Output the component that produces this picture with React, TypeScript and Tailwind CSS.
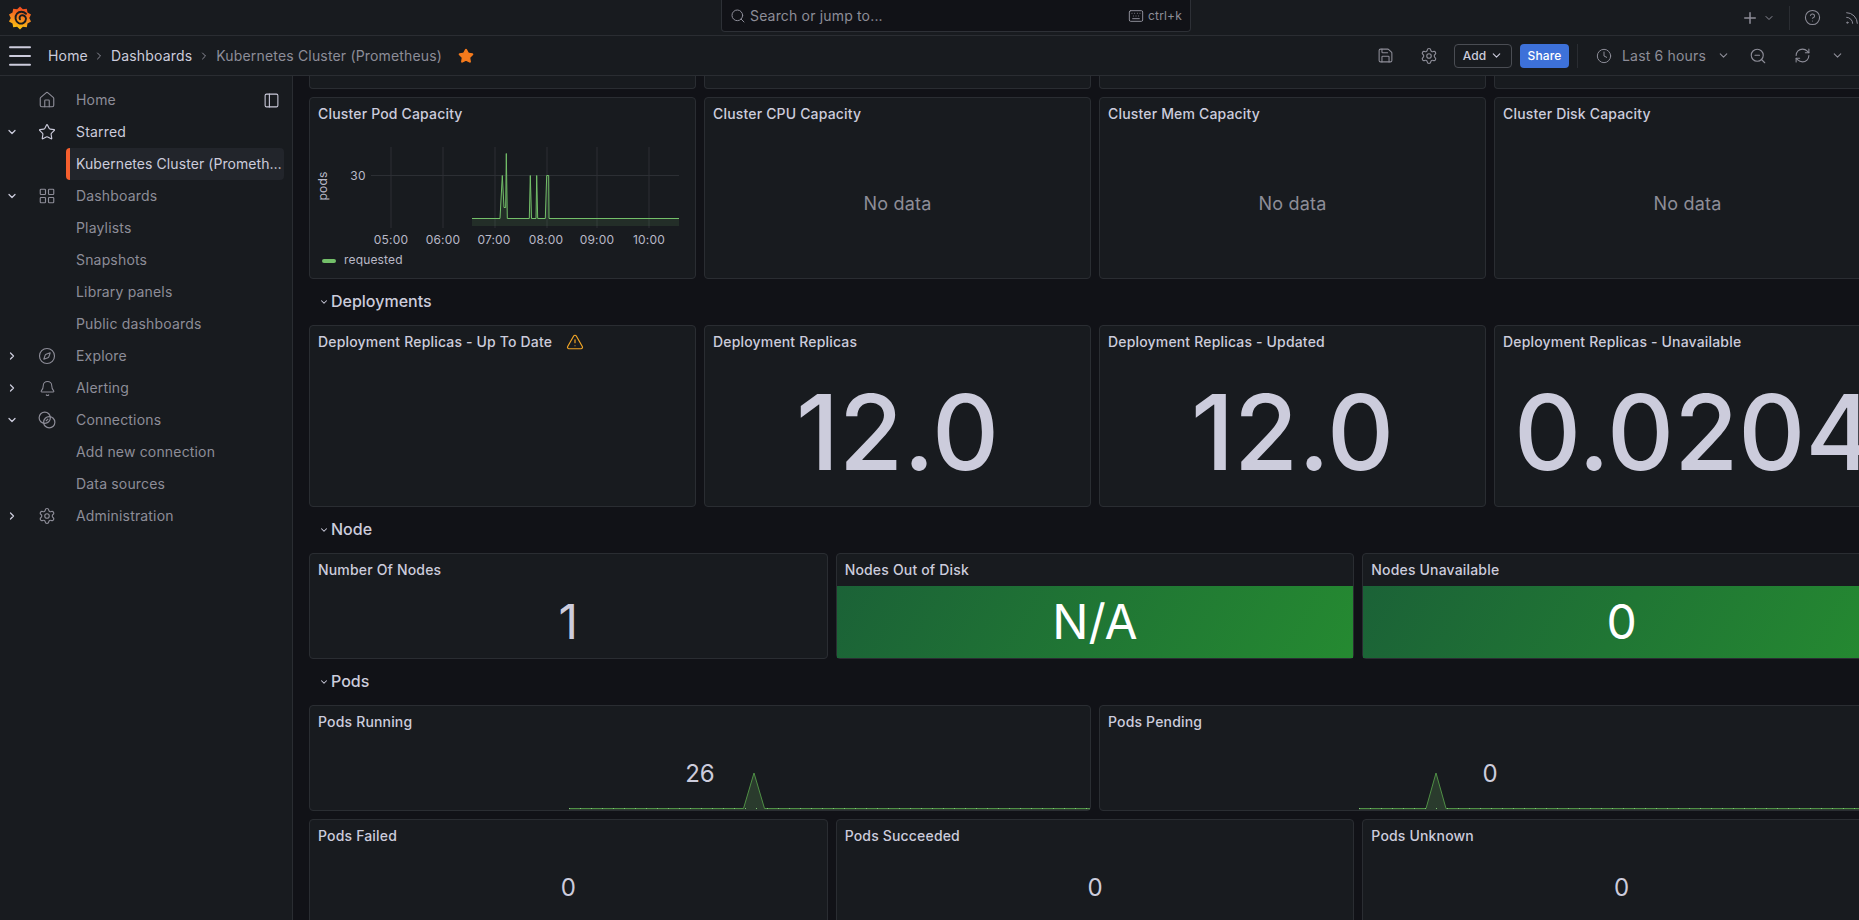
import React from "react";
import {
  Bell,
  ChevronDown,
  ChevronRight,
  CircleHelp,
  Clock,
  Compass,
  House,
  Keyboard,
  LayoutGrid,
  Menu,
  PanelLeft,
  Plus,
  RefreshCw,
  Rss,
  Save,
  Search,
  Settings,
  Star,
  TriangleAlert,
  ZoomOut,
} from "lucide-react";

const ConnectionsIcon = ({ size = 18 }: { size?: number }) => (
  <svg width={size} height={size} viewBox="0 0 24 24" fill="none" stroke="currentColor" strokeWidth="1.6">
    <circle cx="9" cy="9" r="7.5" />
    <circle cx="15" cy="15" r="7.5" />
    <path d="M10.500 13.500l3-3" />
  </svg>
);

// gear outline for the logo
const gear = Array.from({ length: 20 }, (_, i) => {
  const r = i % 2 === 0 ? 13.5 : 10.8;
  const a = (i / 20) * Math.PI * 2;
  return `${14 + r * Math.sin(a)},${15 - r * Math.cos(a)}`;
}).join(" ");

const GrafanaLogo = () => (
  <svg width="24" height="28" viewBox="0 0 28 30">
    <defs>
      <linearGradient id="logo" x1="0.6" y1="0" x2="0.4" y2="1">
        <stop offset="0" stopColor="#f0441f" />
        <stop offset="0.55" stopColor="#f68a1e" />
        <stop offset="1" stopColor="#fbc80d" />
      </linearGradient>
    </defs>
    <polygon points={gear} fill="url(#logo)" />
    <path
      d="M21 10c-3-3-8-3-10.500 0-3 3.500-2 9 2 11 4 1.700 8.500-1 8.500-5 0-3-3-5-5.500-4-2 .8-2.500 3-1.500 4.500"
      fill="none"
      stroke="#181b1f"
      strokeWidth="2.2"
      strokeLinecap="round"
    />
  </svg>
);

const TopBar = () => (
  <div className="flex h-9 items-start border-b border-[#2a2d32] bg-[#181b1f] text-[#8d8d98]">
    <div className="flex h-[35px] w-[721px] shrink-0 items-center pl-2">
      <GrafanaLogo />
    </div>
    <div className="flex h-8 w-[470px] shrink-0 items-center rounded-b-sm border border-t-0 border-[#2d3036] bg-[#111217] pl-2 pr-2">
      <Search size={16} strokeWidth={1.5} />
      <span className="ml-1 text-sm">Search or jump to...</span>
      <Keyboard size={16} strokeWidth={1.5} className="ml-auto" />
      <span className="ml-1 text-xs">ctrl+k</span>
    </div>
    <div className="flex h-[35px] flex-1 items-center pl-[550px]">
      <Plus size={18} strokeWidth={2} />
      <ChevronDown size={12} className="ml-1" />
      <div className="ml-[14px] h-6 w-px bg-[#2a2d32]" />
      <CircleHelp size={17} strokeWidth={1.5} className="ml-[14px]" />
      <Rss size={16} strokeWidth={1.5} className="ml-[23px] shrink-0" />
    </div>
  </div>
);

const NavBar = () => (
  <div className="flex h-10 items-center border-b border-[#2a2d32] bg-[#181b1f] text-sm text-[#8d8d98]">
    <Menu size={30} strokeWidth={1.6} className="ml-[5px] text-[#ccccdc]" />
    <span className="ml-[13px] text-[#ccccdc]">Home</span>
    <ChevronRight size={12} className="ml-[5px]" />
    <span className="ml-[6px] text-[#ccccdc]">Dashboards</span>
    <ChevronRight size={12} className="ml-[6px]" />
    <span className="ml-[6px]">Kubernetes Cluster (Prometheus)</span>
    <Star size={16} className="ml-4 fill-[#f57a1c] text-[#f57a1c]" />
    <Save size={17} strokeWidth={1.5} className="ml-auto" />
    <Settings size={18} strokeWidth={1.5} className="ml-[26px]" />
    <button className="ml-4 flex h-6 w-[58px] items-center justify-center gap-1 rounded-sm border border-[#4a4d53] text-xs font-medium text-[#ccccdc]">
      Add
      <ChevronDown size={13} />
    </button>
    <button className="ml-2 h-6 w-[49px] rounded-sm bg-[#3d71d9] text-xs font-medium text-white">Share</button>
    <div className="ml-2 h-6 w-px bg-[#2a2d32]" />
    <Clock size={16} strokeWidth={1.5} className="ml-[18px]" />
    <span className="ml-[10px]">Last 6 hours</span>
    <ChevronDown size={13} className="ml-[11px]" />
    <ZoomOut size={18} strokeWidth={1.5} className="ml-[19px]" />
    <RefreshCw size={17} strokeWidth={1.5} className="ml-[27px]" />
    <ChevronDown size={13} className="ml-[20px] mr-[15px]" />
  </div>
);

type NavItem = {
  label: string;
  icon?: React.ReactNode;
  chevron?: "down" | "right";
  bright?: boolean;
};

const navItems: NavItem[] = [
  { label: "Home", icon: <House size={18} strokeWidth={1.5} /> },
  { label: "Starred", icon: <Star size={18} strokeWidth={1.5} className="text-[#ccccdc]" />, chevron: "down", bright: true },
  { label: "Kubernetes Cluster (Prometheus)" },
  { label: "Dashboards", icon: <LayoutGrid size={18} strokeWidth={1.5} />, chevron: "down" },
  { label: "Playlists" },
  { label: "Snapshots" },
  { label: "Library panels" },
  { label: "Public dashboards" },
  { label: "Explore", icon: <Compass size={18} strokeWidth={1.5} />, chevron: "right" },
  { label: "Alerting", icon: <Bell size={17} strokeWidth={1.5} />, chevron: "right" },
  { label: "Connections", icon: <ConnectionsIcon />, chevron: "down" },
  { label: "Add new connection" },
  { label: "Data sources" },
  { label: "Administration", icon: <Settings size={18} strokeWidth={1.5} />, chevron: "right" },
];

const Sidebar = () => (
  <aside className="relative w-[293px] shrink-0 border-r border-[#2a2d32] bg-[#181b1f] pt-2 text-sm text-[#8d8d98]">
    {navItems.map((item) => {
      if (item.label.startsWith("Kubernetes")) {
        return (
          <div key={item.label} className="ml-[66px] flex h-8 w-[218px] items-center rounded-sm border-l-4 border-[#f55f2e] bg-[#22252b] pl-[6px] text-[#ccccdc]">
            <span className="w-[208px] shrink-0 truncate tracking-[0.005em]">{item.label}</span>
          </div>
        );
      }
      return (
        <div key={item.label} className={`flex h-8 items-center ${item.bright ? "text-[#ccccdc]" : ""}`}>
          <div className="flex w-6 justify-center text-[#ccccdc]">
            {item.chevron === "down" && <ChevronDown size={12} strokeWidth={2.5} />}
            {item.chevron === "right" && <ChevronRight size={12} strokeWidth={2.5} />}
          </div>
          <div className="ml-[14px] flex w-[18px] justify-center">{item.icon}</div>
          <span className="ml-5">{item.label}</span>
          {item.label === "Home" && <PanelLeft size={17} strokeWidth={1.5} className="ml-auto mr-3 text-[#ccccdc]" />}
        </div>
      );
    })}
  </aside>
);

const Panel = ({
  title,
  className,
  children,
  warn,
}: {
  title: string;
  className: string;
  children?: React.ReactNode;
  warn?: boolean;
}) => (
  <div className={`flex flex-col rounded-sm border border-[#2a2d32] bg-[#181b1f] ${className}`}>
    <div className="flex h-8 shrink-0 items-center px-2 text-sm font-medium text-[#ccccdc]">
      {title}
      {warn && <TriangleAlert size={18} strokeWidth={1.6} className="ml-[14px] text-[#f0a526]" />}
    </div>
    <div className="relative min-h-0 flex-1">{children}</div>
  </div>
);

const Center = ({ className, children }: { className: string; children: React.ReactNode }) => (
  <div className={`flex h-full items-center justify-center text-[#ccccdc] ${className}`}>{children}</div>
);

const RowTitle = ({ title }: { title: string }) => (
  <div className="flex h-[30px] items-center pb-0.5 pl-[10px] text-base font-medium tracking-normal text-[#ccccdc]">
    <ChevronDown size={10} strokeWidth={2.5} className="mr-[2px] mt-px" />
    {title}
  </div>
);

const Capacity = () => (
  <svg className="block h-full w-full" viewBox="310 130 385 148" preserveAspectRatio="none">
    {[391, 443, 495, 547, 597, 649].map((x) => (
      <line key={x} x1={x} x2={x} y1="147" y2="228" stroke="#2c2f34" />
    ))}
    <line x1="371" x2="679" y1="175.500" y2="175.500" stroke="#2c2f34" />
    <path
      d="M472 218.500H500L502.300 175.500L504 207.500H505.700L506.300 153.500L507.300 218.500H529.300L530.300 175.500L531.500 218.500H536L536.700 175.500L537.700 218.500H545.300L546.700 175.500H548.700L549 218.500H679V226H472Z"
      fill="#73bf69"
      fillOpacity="0.12"
    />
    <path
      d="M472 218.500H500L502.300 175.500L504 207.500H505.700L506.300 153.500L507.300 218.500H529.300L530.300 175.500L531.500 218.500H536L536.700 175.500L537.700 218.500H545.300L546.700 175.500H548.700L549 218.500H679"
      fill="none"
      stroke="#73bf69"
    />
    <g fill="#b9b9c7" fontSize="12" textAnchor="middle" fontFamily="Inter, sans-serif">
      {["05:00", "06:00", "07:00", "08:00", "09:00", "10:00"].map((t, i) => (
        <text key={t} x={[391, 443, 494, 546, 597, 649][i]} y="243.500">
          {t}
        </text>
      ))}
      <text x="358" y="179.500">30</text>
      <text transform="translate(327 186) rotate(-90)">pods</text>
      <text x="344" y="264" textAnchor="start">requested</text>
    </g>
    <rect x="322" y="259" width="14" height="4" rx="2" fill="#73bf69" />
  </svg>
);

// sparkline behind the stat value, x values are px from the panel's left edge
const Spark = ({ start, peak, halfWidth, width }: { start: number; peak: number; halfWidth: number; width: number }) => (
  <svg className="absolute bottom-0 left-0 block" width={width} height="40" viewBox={`0 0 ${width} 40`}>
    <path
      d={`M${start} 38.500H${peak - halfWidth}L${peak} 3L${peak + halfWidth} 38.500H${width}V40H${start}Z`}
      fill="#73bf69"
      fillOpacity="0.2"
    />
    <path
      d={`M${start} 38.500H${peak - halfWidth}L${peak} 3L${peak + halfWidth} 38.500H${width}`}
      fill="none"
      stroke="#4f8f45"
    />
    <line x1={start} x2={width} y1="38.500" y2="38.500" stroke="#7fc476" strokeDasharray="1 10" />
  </svg>
);

const noDataPanels = ["Cluster CPU Capacity", "Cluster Mem Capacity", "Cluster Disk Capacity"];

const Dashboard = () => (
  <main className="min-w-0 flex-1 overflow-hidden bg-[#111217] pl-4">
    <div className="flex w-[1572px] flex-col gap-2">
      <div className="grid grid-cols-24 gap-x-2 gap-y-2">
        {[0, 1, 2, 3].map((i) => (
          <div key={i} className="col-span-6 h-[13px] rounded-b-sm border border-t-0 border-[#2a2d32] bg-[#181b1f]" />
        ))}
        <Panel title="Cluster Pod Capacity" className="col-span-6 h-[182px]">
          <Capacity />
        </Panel>
        {noDataPanels.map((t) => (
          <Panel key={t} title={t} className="col-span-6 h-[182px]">
            <Center className="text-lg !text-[#8d8d98]">No data</Center>
          </Panel>
        ))}
      </div>

      <RowTitle title="Deployments" />
      <div className="grid grid-cols-24 gap-2">
        <Panel title="Deployment Replicas - Up To Date" warn className="col-span-6 h-[182px]" />
        <Panel title="Deployment Replicas" className="col-span-6 h-[182px]">
          <Center className="text-[104px] font-medium leading-none tracking-normal">12.0</Center>
        </Panel>
        <Panel title="Deployment Replicas - Updated" className="col-span-6 h-[182px]">
          <Center className="text-[104px] font-medium leading-none tracking-normal">12.0</Center>
        </Panel>
        <Panel title="Deployment Replicas - Unavailable" className="col-span-6 h-[182px] overflow-hidden">
          <Center className="!justify-start whitespace-nowrap pl-[19px] text-[104px] font-medium leading-none tracking-normal">0.0204</Center>
        </Panel>
      </div>

      <RowTitle title="Node" />
      <div className="grid grid-cols-24 gap-2">
        <Panel title="Number Of Nodes" className="col-span-8 h-[106px]">
          <Center className="text-5xl tracking-normal">1</Center>
        </Panel>
        <Panel title="Nodes Out of Disk" className="col-span-8 h-[106px]">
          <Center className="bg-[linear-gradient(120deg,#1b6237,#258a31)] text-5xl tracking-normal !text-white">N/A</Center>
        </Panel>
        <Panel title="Nodes Unavailable" className="col-span-8 h-[106px]">
          <Center className="bg-[linear-gradient(120deg,#1b6237,#258a31)] text-5xl tracking-normal !text-white">0</Center>
        </Panel>
      </div>

      <RowTitle title="Pods" />
      <div className="grid grid-cols-24 gap-2">
        <Panel title="Pods Running" className="col-span-12 h-[106px]">
          <Spark start={259} peak={444} halfWidth={10.500} width={780} />
          <Center className="relative text-2xl tracking-normal">26</Center>
        </Panel>
        <Panel title="Pods Pending" className="col-span-12 h-[106px]">
          <Spark start={259} peak={336} halfWidth={10} width={780} />
          <Center className="relative text-2xl tracking-normal">0</Center>
        </Panel>
        <Panel title="Pods Failed" className="col-span-8 h-[106px]">
          <Center className="text-2xl tracking-normal">0</Center>
        </Panel>
        <Panel title="Pods Succeeded" className="col-span-8 h-[106px]">
          <Center className="text-2xl tracking-normal">0</Center>
        </Panel>
        <Panel title="Pods Unknown" className="col-span-8 h-[106px]">
          <Center className="text-2xl tracking-normal">0</Center>
        </Panel>
      </div>
    </div>
  </main>
);

const App: React.FC = () => (
  <div className="flex h-[920px] w-[1859px] flex-col overflow-hidden bg-[#111217] font-[Inter,sans-serif] tracking-[0.01071em]">
    <TopBar />
    <NavBar />
    <div className="flex min-h-0 flex-1">
      <Sidebar />
      <Dashboard />
    </div>
  </div>
);

export default App;
